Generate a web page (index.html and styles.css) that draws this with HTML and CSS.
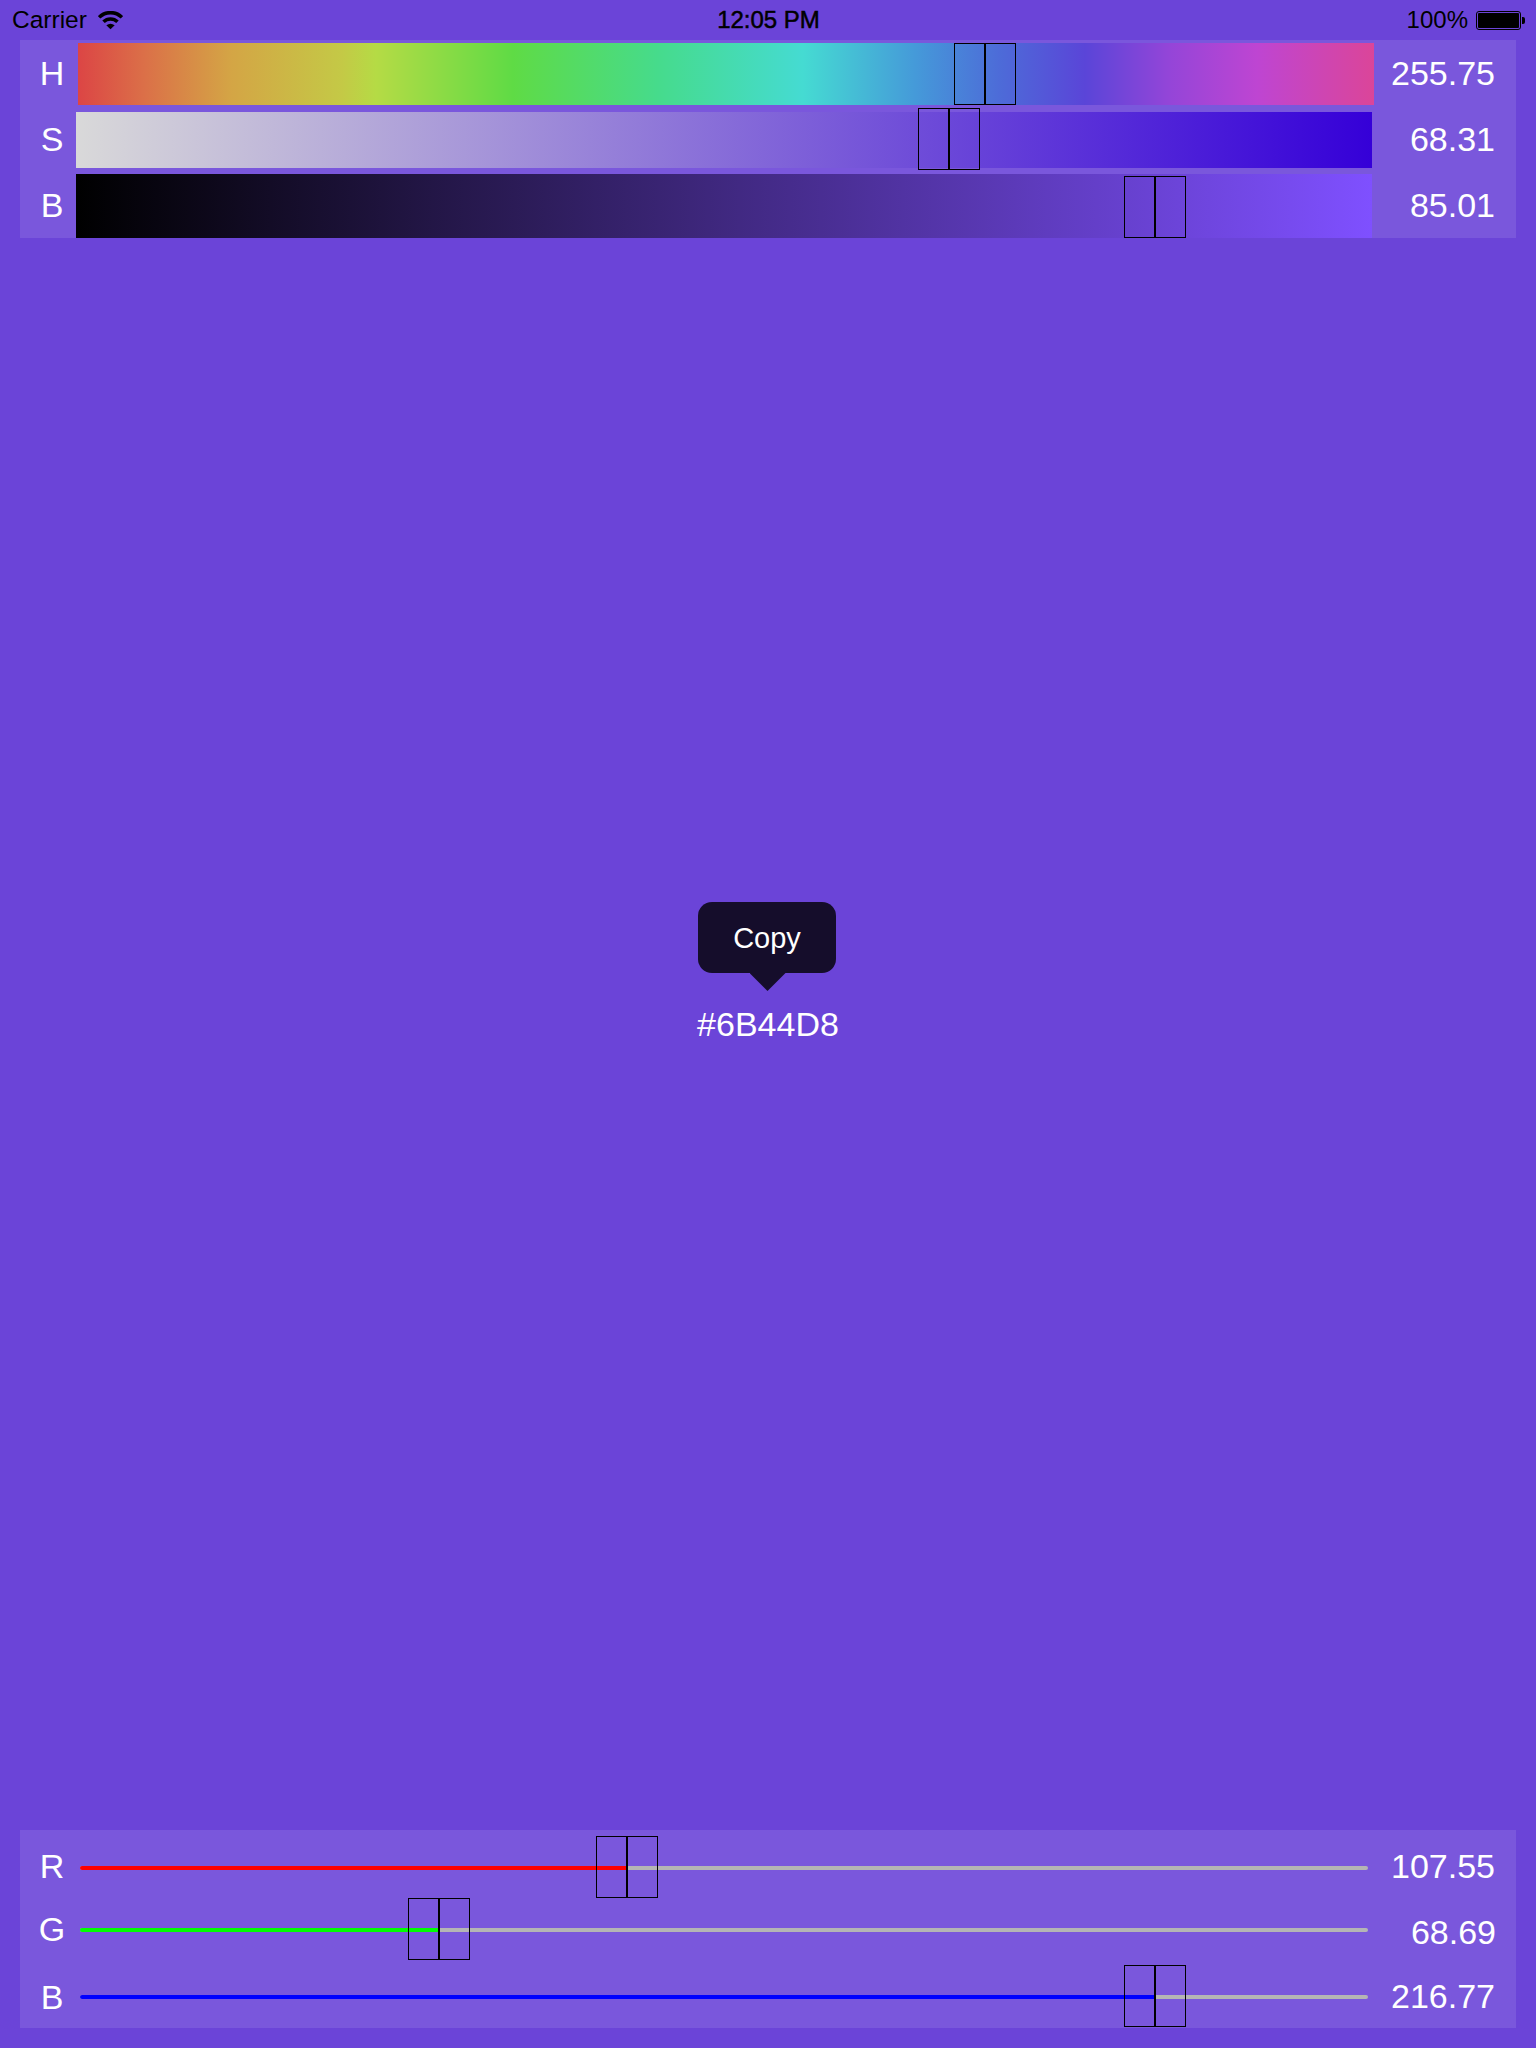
FILE: index.html
```html
<!DOCTYPE html>
<html lang="en">
<head>
    <meta charset="UTF-8">
    <meta name="viewport" content="width=device-width, initial-scale=1.0">
    <title>Color Picker</title>
    <link rel="stylesheet" href="styles.css">
</head>
<body>
    <div class="page">
        <div class="statusbar">
            <div class="status-left">
                <span class="carrier">Carrier</span>
                <svg class="wifi" viewBox="0 0 24 18" width="25" height="19">
                    <path d="M1 6 A15.5 15.5 0 0 1 23 6" fill="none" stroke="#000" stroke-width="3.4"/>
                    <path d="M5.3 10.3 A9.5 9.5 0 0 1 18.7 10.3" fill="none" stroke="#000" stroke-width="3.4"/>
                    <path d="M12 17.5 L8 13.5 Q12 10.5 16 13.5 Z" fill="#000"/>
                </svg>
            </div>
            <div class="status-time">12:05 PM</div>
            <div class="status-right">
                <span>100%</span>
                <div class="battery"><div class="battery-level"></div></div>
                <div class="battery-nub"></div>
            </div>
        </div>

        <div class="panel panel-hsb">
            <div class="row row-h">
                <div class="label">H</div>
                <div class="bar bar-h"><div class="thumb" style="left: 876px"></div></div>
                <div class="value">255.75</div>
            </div>
            <div class="row row-s">
                <div class="label">S</div>
                <div class="bar bar-s"><div class="thumb thumb-s" style="left: 842px"></div></div>
                <div class="value">68.31</div>
            </div>
            <div class="row row-b">
                <div class="label">B</div>
                <div class="bar bar-b"><div class="thumb thumb-b" style="left: 1048px"></div></div>
                <div class="value">85.01</div>
            </div>
        </div>

        <div class="middle">
            <div class="copy-menu">Copy</div>
            <div class="copy-tail"></div>
            <div class="hex">#6B44D8</div>
        </div>

        <div class="panel panel-rgb">
            <div class="row row-first">
                <div class="label">R</div>
                <div class="slider">
                    <div class="track"><div class="fill fill-r" style="width: 547px"></div></div>
                    <div class="thumb" style="left: 516px"></div>
                </div>
                <div class="value">107.55</div>
            </div>
            <div class="row">
                <div class="label">G</div>
                <div class="slider">
                    <div class="track"><div class="fill fill-g" style="width: 359px"></div></div>
                    <div class="thumb" style="left: 328px"></div>
                </div>
                <div class="value value-low">68.69</div>
            </div>
            <div class="row row-last">
                <div class="label label-low">B</div>
                <div class="slider">
                    <div class="track"><div class="fill fill-b" style="width: 1075px"></div></div>
                    <div class="thumb" style="left: 1044px"></div>
                </div>
                <div class="value">216.77</div>
            </div>
        </div>
    </div>
</body>
</html>
```

FILE: styles.css
```css
body {
    margin: 0;
    background: #6b44d8;
    font-family: "Liberation Sans", Arial, sans-serif;
    color: #fff;
}
.page {
    display: flex;
    flex-direction: column;
    height: 2048px;
    overflow: hidden;
}

/* status bar */
.statusbar {
    display: grid;
    grid-template-columns: 1fr auto 1fr;
    align-items: center;
    height: 40px;
    padding: 0 11px 0 12px;
    color: #000;
    font-size: 24px;
}
.status-left {
    display: flex;
    align-items: center;
    gap: 11px;
}
.carrier {
    font-size: 24.5px;
}
.status-time {
    -webkit-text-stroke: 0.5px #000;
}
.status-right {
    display: flex;
    align-items: center;
    justify-content: flex-end;
}
.wifi {
    display: block;
}
.battery {
    box-sizing: border-box;
    width: 45px;
    height: 19px;
    margin-left: 8px;
    padding: 1px;
    border: 1px solid #000;
    border-radius: 3px;
}
.battery-level {
    height: 100%;
    background: #000;
    border-radius: 1px;
}
.battery-nub {
    width: 3px;
    height: 7px;
    margin-left: 1px;
    background: #000;
    border-radius: 0 2px 2px 0;
}

/* slider panels */
.panel {
    height: 198px;
    margin: 0 20px;
    background: rgba(255, 255, 255, 0.1);
}
.panel-hsb {
    padding-top: 3px;
    height: 195px;
}
.panel-rgb {
    padding-top: 6px;
    height: 192px;
    margin-bottom: 20px;
}
.row {
    display: flex;
    align-items: center;
    height: 62px;
}
.row-s {
    height: 56px;
    margin-top: 7px;
}
.row-b {
    height: 64px;
    margin-top: 6px;
}
.row-last {
    margin-top: 5px;
}
.label {
    box-sizing: border-box;
    flex: none;
    width: 56px;
    padding-left: 8px;
    font-size: 34px;
    text-align: center;
}
.value {
    flex: 1;
    padding-right: 21px;
    font-size: 34px;
    text-align: right;
}
.panel-hsb .label,
.panel-hsb .value,
.row-first .label,
.row-first .value {
    padding-bottom: 2px;
}
.label-low {
    padding-top: 2px;
}
.value-low {
    margin-top: 6px;
    padding-right: 20px;
}

/* gradient bars */
.bar {
    position: relative;
    flex: none;
    width: 1296px;
    height: 100%;
}
.bar-h {
    margin-left: 2px;
    margin-right: -2px;
    background: linear-gradient(to right,
        #dc4545 0,
        #db7048 67px,
        #d4a545 153px,
        #c4c946 264px,
        #b5db45 298px,
        #5fdb45 435px,
        #46db8c 580px,
        #45dbd2 725px,
        #459ad9 837px,
        #4d6bd8 922px,
        #5a45d8 1007px,
        #9545d8 1093px,
        #be45d2 1179px,
        #db4599 100%);
}
.bar-s {
    background: linear-gradient(to right, #d9d9d9, #3500d8);
}
.bar-b {
    background: linear-gradient(to right, #000, #7f50ff);
}

/* thumbs sit over the bars and tracks */
.thumb {
    position: absolute;
    top: 0;
    box-sizing: border-box;
    width: 62px;
    height: 62px;
    border: 1px solid #000;
}
.thumb::after {
    content: "";
    position: absolute;
    top: 0;
    bottom: 0;
    left: 29px;
    width: 2px;
    background: #000;
}
.thumb-s {
    top: -4px;
}
.thumb-b {
    top: 2px;
}

/* rgb sliders */
.slider {
    position: relative;
    flex: none;
    display: flex;
    align-items: center;
    width: 1288px;
    height: 62px;
    margin-left: 4px;
    margin-right: 4px;
}
.track {
    width: 100%;
    height: 4px;
    margin-top: 2px;
    background: #b5b5b5;
    border-radius: 2px;
}
.fill {
    height: 100%;
    border-radius: 2px 0 0 2px;
}
.fill-r {
    background: #ff0000;
}
.fill-g {
    background: #00ff00;
}
.fill-b {
    background: #0000ff;
}

/* copy menu and hex value */
.middle {
    flex: 1;
    display: flex;
    flex-direction: column;
    align-items: center;
    padding-top: 664px;
}
.copy-menu {
    width: 138px;
    height: 71px;
    margin-right: 2px;
    line-height: 73px;
    background: #150d2b;
    border-radius: 14px;
    font-size: 29px;
    text-align: center;
}
.copy-tail {
    width: 36px;
    height: 18px;
    margin-right: 1px;
    background: #150d2b;
    clip-path: polygon(0 0, 100% 0, 50% 100%);
}
.hex {
    margin-top: 14px;
    font-size: 34px;
    line-height: 39px;
}
```
